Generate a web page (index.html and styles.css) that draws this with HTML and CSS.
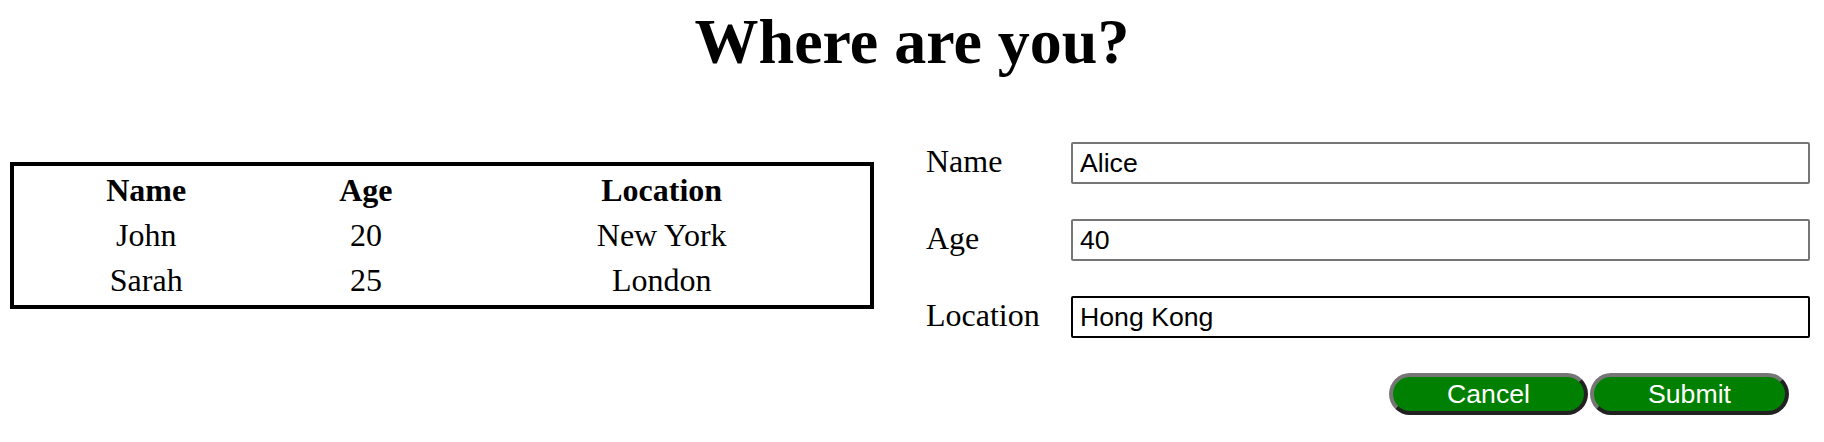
FILE: index.html
```html
<!DOCTYPE html>
<html lang="en">
<head>
<meta charset="utf-8">
<title>Where are you?</title>
<link rel="stylesheet" href="styles.css">
</head>
<body>
<h1 class="title">Where are you?</h1>
<main class="main">
  <section class="left">
    <table class="people">
      <thead>
        <tr><th>Name</th><th>Age</th><th>Location</th></tr>
      </thead>
      <tbody>
        <tr><td>John</td><td>20</td><td>New York</td></tr>
        <tr><td>Sarah</td><td>25</td><td>London</td></tr>
      </tbody>
    </table>
  </section>
  <form class="form">
    <div class="row">
      <label class="label" for="name">Name</label>
      <input class="field" id="name" type="text" value="Alice">
    </div>
    <div class="row">
      <label class="label" for="age">Age</label>
      <input class="field" id="age" type="text" value="40">
    </div>
    <div class="row">
      <label class="label" for="loc">Location</label>
      <input class="field field-active" id="loc" type="text" value="Hong Kong">
    </div>
    <div class="actions">
      <button class="btn" type="button">Cancel</button>
      <button class="btn" type="button">Submit</button>
    </div>
  </form>
</main>
</body>
</html>
```

FILE: styles.css
```css
html, body {
  margin: 0;
  padding: 0;
  background: #ffffff;
}

body {
  font-family: "Liberation Serif", "Times New Roman", serif;
  font-size: 32px;
  color: #000;
  padding: 5px 10px 0 10px;
}

.title {
  margin: 0;
  font-size: 64px;
  font-weight: bold;
  line-height: 74px;
  text-align: center;
}

.main {
  display: flex;
  align-items: flex-start;
  gap: 52px;
  margin-top: 63px;
}

.left {
  width: 864px;
  flex: none;
  margin-top: 20px;
}

.people {
  width: 100%;
  border: 4px solid #000;
  border-spacing: 4px;
  font-size: 32px;
  text-align: center;
}

.people th,
.people td {
  padding: 2px;
  line-height: 37px;
}

.form {
  width: 884px;
  display: flex;
  flex-direction: column;
  gap: 35px;
}

.row {
  display: flex;
  align-items: baseline;
}

.label {
  width: 145px;
  flex: none;
  font-size: 32px;
  line-height: 37px;
}

.field {
  width: 739px;
  height: 42px;
  box-sizing: border-box;
  margin: 0;
  padding: 0 7px;
  border: 2px solid #767676;
  border-radius: 2px;
  font-family: "Liberation Sans", Arial, sans-serif;
  font-size: 26.67px;
  color: #000;
  background: #fff;
  outline: none;
}

.field-active {
  border-color: #000;
}

.actions {
  display: flex;
  justify-content: flex-end;
  gap: 2px;
  padding-right: 21px;
}

.btn {
  width: 199px;
  height: 42px;
  box-sizing: border-box;
  margin: 0;
  padding: 0;
  background: #008000;
  color: #fff;
  font-family: "Liberation Sans", Arial, sans-serif;
  font-size: 26.67px;
  border-style: solid;
  border-width: 4px;
  border-color: #767676 #222 #222 #767676;
  border-radius: 21px;
}
```
